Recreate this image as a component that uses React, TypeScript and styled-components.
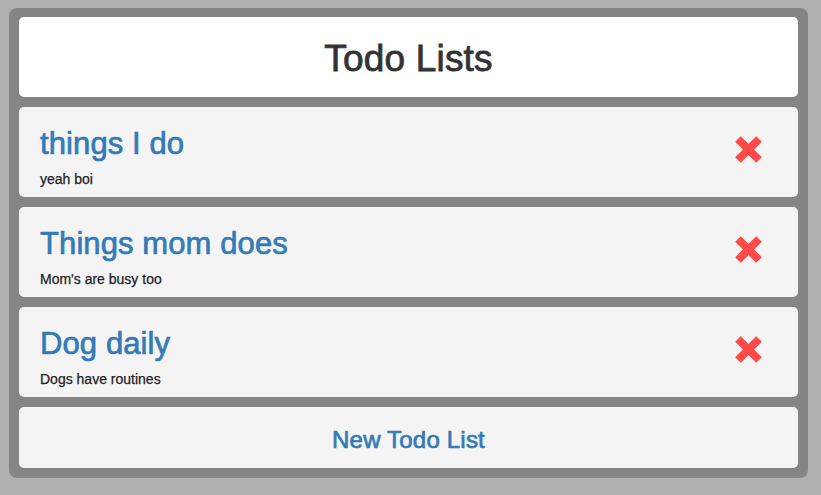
import React from "react";
import styled, { createGlobalStyle } from "styled-components";

const GlobalStyle = createGlobalStyle`
  html, body {
    margin: 0;
    padding: 0;
    background: #afafaf;
    font-family: "Liberation Sans", Arial, Helvetica, sans-serif;
    color: #333;
  }
  * { box-sizing: border-box; }
`;

const Page = styled.div`
  padding: 8px 13px 17px 9px;
`;

const Panel = styled.div`
  background: #858585;
  border-radius: 8px;
  padding: 9px 10px 10px 10px;
  display: flex;
  flex-direction: column;
  gap: 10px;
`;

const Header = styled.div`
  height: 80px;
  background: #ffffff;
  border-radius: 5px;
  display: flex;
  align-items: center;
  justify-content: center;
  padding-top: 5px;
`;

const HeaderTitle = styled.h1`
  margin: 0;
  font-size: 37px;
  font-weight: 400;
  line-height: 1.15;
  letter-spacing: 0.2px;
  color: #333;
  -webkit-text-stroke: 0.8px #333;
`;

const Card = styled.div`
  height: 90px;
  background: #f4f4f4;
  border-radius: 5px;
  display: flex;
  align-items: flex-start;
  justify-content: space-between;
  padding: 20px 36px 0 21px;
`;

const CardText = styled.div`
  display: flex;
  flex-direction: column;
  gap: 8px;
`;

const CardTitle = styled.a`
  font-size: 31px;
  line-height: 1.1;
  letter-spacing: 0.1px;
  color: #337ab7;
  text-decoration: none;
  -webkit-text-stroke: 0.7px #337ab7;
  cursor: pointer;
`;

const CardSub = styled.div`
  font-size: 14px;
  line-height: 20px;
  color: #222;
  -webkit-text-stroke: 0.25px #222;
`;

const DeleteButton = styled.button`
  border: none;
  background: none;
  padding: 0;
  margin-top: 9px;
  width: 27px;
  height: 27px;
  cursor: pointer;
  display: block;
`;

const NewButton = styled.button`
  height: 61px;
  border: none;
  background: #f4f4f4;
  border-radius: 5px;
  display: flex;
  align-items: center;
  justify-content: center;
  padding-top: 6px;
  font-family: inherit;
  font-size: 24px;
  letter-spacing: 0.2px;
  color: #337ab7;
  -webkit-text-stroke: 0.7px #337ab7;
  cursor: pointer;
`;

const XIcon = () => (
  <svg width="27" height="27" viewBox="0 0 27 27">
    <g stroke="#ff4a4a" strokeWidth="8" strokeLinecap="butt">
      <line x1="3" y1="3" x2="24" y2="24" />
      <line x1="24" y1="3" x2="3" y2="24" />
    </g>
  </svg>
);

const lists = [
  { title: "things I do", sub: "yeah boi" },
  { title: "Things mom does", sub: "Mom's are busy too" },
  { title: "Dog daily", sub: "Dogs have routines" },
];

export default function App() {
  return (
    <>
      <GlobalStyle />
      <Page>
        <Panel>
          <Header>
            <HeaderTitle>Todo Lists</HeaderTitle>
          </Header>
          {lists.map((l) => (
            <Card key={l.title}>
              <CardText>
                <CardTitle>{l.title}</CardTitle>
                <CardSub>{l.sub}</CardSub>
              </CardText>
              <DeleteButton aria-label="Delete">
                <XIcon />
              </DeleteButton>
            </Card>
          ))}
          <NewButton>New Todo List</NewButton>
        </Panel>
      </Page>
    </>
  );
}
